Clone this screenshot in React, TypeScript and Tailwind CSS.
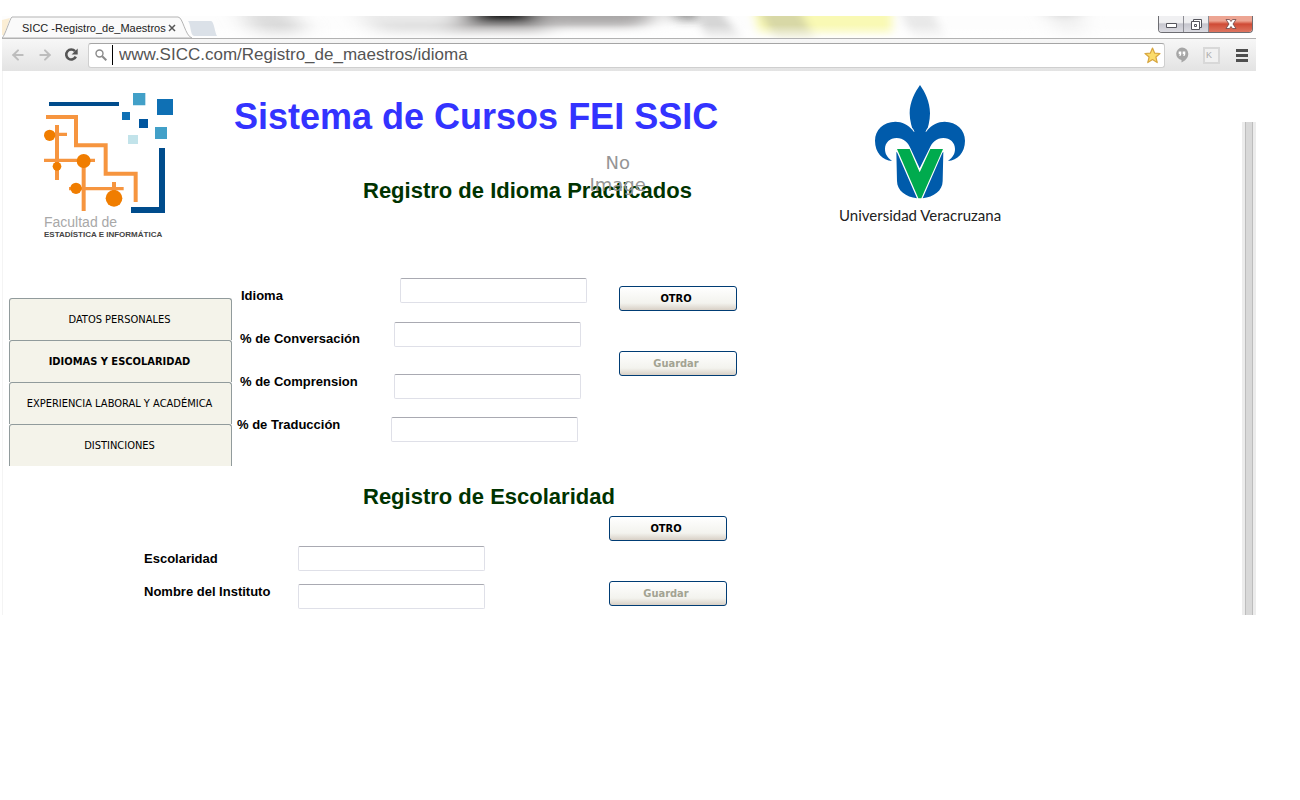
import { ArrowLeft, ArrowRight } from "lucide-react";

const navItems = [
  { text: "DATOS PERSONALES", active: false },
  { text: "IDIOMAS Y ESCOLARIDAD", active: true },
  { text: "EXPERIENCIA LABORAL Y ACADÉMICA", active: false },
  { text: "DISTINCIONES", active: false },
];

const fieldClass =
  "block h-[25px] w-[187px] rounded-[2px] border border-[#dfe0e8] border-t-[#a9aab2] bg-white px-1 text-[13px]";

function TitleBackdrop() {
  return (
    <svg className="absolute inset-0 h-full w-full" viewBox="0 0 1254 22" preserveAspectRatio="none" aria-hidden="true">
      <defs>
        <filter id="soft" x="-20%" y="-60%" width="140%" height="220%">
          <feGaussianBlur stdDeviation="12 4" />
        </filter>
        <filter id="softer" x="-20%" y="-60%" width="140%" height="220%">
          <feGaussianBlur stdDeviation="5 3" />
        </filter>
        <linearGradient id="fade" x1="0" x2="0" y1="0" y2="1">
          <stop offset="0.4" stopColor="#fff" stopOpacity="0" />
          <stop offset="1" stopColor="#fff" stopOpacity="0.8" />
        </linearGradient>
      </defs>
      <rect width="1254" height="22" fill="#fdfdfd" />
      <g filter="url(#soft)">
        <path d="M238 -8H288L304 30H258Z" fill="#dcdcdc" />
        <path d="M275 7H300V18H275Z" fill="#d6d6d6" />
        <path d="M352 -8H462V26H378Z" fill="#e9e9e9" />
        <path d="M380 8H450V18H380Z" fill="#dcdcdc" />
        <path d="M462 -10H640V12H545V20H445Z" fill="#bcbaba" />
        <path d="M466 -12H535V8H470Z" fill="#101010" />
        <path d="M545 -10H650V6H545Z" fill="#a8a6a6" />
        <path d="M674 -12H694V5H680Z" fill="#3a3a3a" />
        <path d="M1046 -10H1074V4H1054Z" fill="#c0c0c0" />
        <path d="M1054 0H1072L1084 28H1062Z" fill="#ececec" />
      </g>
      <g filter="url(#softer)">
        <path d="M694 -6H718L744 30H706Z" fill="#d6d6d6" />
        <path d="M751 -8H890V20H757Z" fill="#f9f9b4" />
        <path d="M756 -6H798L816 30H776Z" fill="#d8d8a6" />
        <path d="M898 -6H930L946 30H914Z" fill="#e9e9e9" />
      </g>
      <rect width="1254" height="22" fill="url(#fade)" />
    </svg>
  );
}

function TitleBar() {
  return (
    <div className="relative flex h-[22px] items-start overflow-hidden">
      <TitleBackdrop />
      <div className="relative h-full w-56">
        <svg className="absolute inset-0 h-full w-full" viewBox="0 0 224 22" aria-hidden="true">
          <path d="M0 4L8 2L2 19H0Z" fill="#fbeed5" />
          <path d="M0 22C3 20 8 2 10 1H176C181 1 183 20 190 22Z" fill="#fafafa" stroke="#b4b4b4" />
          <path d="M186 5H209C212 5 213 17 215 20H192C188 19 189 8 186 5Z" fill="#dbe1e8" />
        </svg>
        <div className="relative flex items-center gap-0.5 pt-1 pl-5 text-[11px] leading-4 text-[#222]">
          <span>SICC -Registro_de_Maestros</span>
          <button type="button" aria-label="Cerrar pestaña" className="h-2 w-2">
            <svg viewBox="0 0 8 8" className="h-2 w-2" stroke="#555" strokeWidth="1.5">
              <path d="M1 1L7 7M7 1L1 7" />
            </svg>
          </button>
        </div>
      </div>
      <div className="relative mr-[3px] ml-auto flex h-[17px] overflow-hidden rounded-b border border-t-0 border-[#6d6d72]">
        <button type="button" aria-label="Minimizar" className="flex w-[25px] items-center justify-center border-r border-[#8d8d94] bg-linear-to-b from-[#f0f0f2] from-40% via-[#c6c6ce] via-50% to-[#dcdce2]">
          <svg viewBox="0 0 11 5" className="mt-0.5 h-[5px] w-[11px]">
            <path d="M.5 .5H10.5V4.5H.5Z" fill="#fff" stroke="#55555c" />
          </svg>
        </button>
        <button type="button" aria-label="Restaurar" className="flex w-[25px] items-center justify-center border-r border-[#8d8d94] bg-linear-to-b from-[#f0f0f2] from-40% via-[#c6c6ce] via-50% to-[#dcdce2]">
          <svg viewBox="0 0 11 11" className="h-[11px] w-[11px]" fill="#fff" stroke="#55555c">
            <path d="M2.5 .5H10.5V8.5H2.5Z" />
            <path d="M.5 2.5H8.5V10.5H.5Z" />
            <path d="M3.5 5.5H5.5V7.5H3.5Z" />
          </svg>
        </button>
        <button type="button" aria-label="Cerrar" className="flex w-[43px] items-center justify-center bg-linear-to-b from-[#eda593] from-30% via-[#cf4a35] via-50% to-[#de7560]">
          <svg viewBox="0 0 12 10" className="h-[10px] w-3">
            <path d="M1 .5H4.5L6 2.5L7.500 .5H11L8 5L11 9.500H7.500L6 7.500L4.500 9.500H1L4 5Z" fill="#fff" stroke="#6b4548" strokeWidth=".8" />
          </svg>
        </button>
      </div>
    </div>
  );
}

function ToolBar() {
  return (
    <div className="flex h-[33px] items-center border-t border-[#b2b2b2] bg-linear-to-b from-[#f7f7f7] to-[#e3e3e3] pr-2 pl-2">
      <div className="flex w-[78px] items-center gap-[11px] text-[#bdbdbd]">
        <button type="button" aria-label="Atrás">
          <ArrowLeft className="h-4 w-4" strokeWidth={3} />
        </button>
        <button type="button" aria-label="Adelante">
          <ArrowRight className="h-4 w-4" strokeWidth={3} />
        </button>
        <button type="button" aria-label="Recargar">
          <svg viewBox="0 0 14 14" className="h-[14px] w-[14px]">
            <path d="M11 3.200A5 5 0 1 0 11.800 8.600" fill="none" stroke="#555" strokeWidth="2.600" />
            <path d="M13.700 .4V6.500H7.600Z" fill="#555" />
          </svg>
        </button>
      </div>
      <div className="flex h-[25px] flex-1 items-center rounded-[3px] border border-[#cfcfcf] border-t-[#a5a5a5] bg-white pr-[3px] pl-1.5">
        <svg viewBox="0 0 12 12" className="h-3 w-3" fill="none" stroke="#8a8a8a">
          <circle cx="4.500" cy="4.500" r="3.500" strokeWidth="1.400" />
          <path d="M7.200 7.200L11.300 11.300" strokeWidth="2" />
        </svg>
        <span className="ml-[5px] h-5 w-px bg-black" />
        <input
          aria-label="Dirección"
          defaultValue="www.SICC.com/Registro_de_maestros/idioma"
          className="ml-1.5 min-w-0 flex-1 bg-transparent text-[17px] leading-5 text-[#555] outline-none"
        />
        <button type="button" aria-label="Marcador">
          <svg viewBox="0 0 17 17" className="h-[17px] w-[17px]">
            <path d="M8.500 1L10.600 6.100L16 6.500L11.900 10L13.200 15.600L8.500 12.600L3.800 15.600L5.100 10L1 6.500L6.400 6.100Z" fill="#fbdc6a" stroke="#d7a640" strokeWidth="1.200" strokeLinejoin="round" />
          </svg>
        </button>
      </div>
      <div className="ml-[10px] flex items-center gap-[14px]">
        <button type="button" aria-label="Hangouts">
          <svg viewBox="0 0 14 16" className="h-4 w-[14px]">
            <path d="M7 .5A6.300 6.300 0 0 1 13.300 6.800C13.300 11 10 14 6.500 15.500V13A6.300 6.300 0 0 1 7 .5Z" fill="#a6a6a6" />
            <path d="M3.700 4.500H6.300V7.200L5.400 9H4.200L5 7.200H3.700ZM7.700 4.500H10.300V7.200L9.400 9H8.200L9 7.200H7.700Z" fill="#fff" />
          </svg>
        </button>
        <button type="button" aria-label="Extensión K" className="flex h-[17px] w-[17px] items-start border-2 border-[#d8d8d8] bg-[#f1f1f1] pl-px text-[9px] leading-[12px] text-[#aaa]">
          K
        </button>
        <button type="button" aria-label="Menú" className="ml-0.5 flex w-3 flex-col gap-0.5">
          <span className="h-[3px] bg-[#4f4f4f]" />
          <span className="h-[3px] bg-[#4f4f4f]" />
          <span className="h-[3px] bg-[#4f4f4f]" />
        </button>
      </div>
    </div>
  );
}

function FacultyLogo() {
  return (
    <div className="w-[135px]">
      <svg viewBox="60 36 405 366" className="h-[122px] w-[135px]" role="img" aria-label="Facultad de Estadística e Informática">
        <path d="M87 66H297V78H87Z M417 204H435V399H333V381H417Z" fill="#004c8c" />
        <path d="M339 39H376V76H339Z M405 141H441V177H405Z" fill="#42a0c8" />
        <path d="M411 57H459V105H411Z M306 96H330V120H306Z" fill="#0f70b4" />
        <path d="M357 117H384V144H357Z" fill="#00569f" />
        <path d="M324 165H354V192H324Z" fill="#c2e3ea" />
        <g fill="none" stroke="#f6953f">
          <path d="M78 111H168V196H257V281H347V366 M111 135V300 M191 241V393 M282 306V345" strokeWidth="12" />
          <path d="M90 163H141 M72 241H225 M147 326H311" strokeWidth="10" />
        </g>
        <g fill="#f07d00">
          <circle cx="89" cy="166" r="17" />
          <circle cx="111" cy="259" r="13" />
          <circle cx="191" cy="243" r="21" />
          <circle cx="168" cy="325" r="17" />
          <circle cx="282" cy="355" r="25" />
        </g>
      </svg>
      <p className="pl-1 text-[14px] leading-4 text-[#a8a8a8]">Facultad de</p>
      <p className="pl-1 text-[8px] leading-[10px] font-bold whitespace-nowrap text-[#444]">ESTADÍSTICA E INFORMÁTICA</p>
    </div>
  );
}

function UniversityLogo() {
  return (
    <div className="flex flex-col items-center">
      <svg viewBox="150 24 300 351" className="h-[117px] w-[100px]" role="img" aria-label="Universidad Veracruzana">
        <g fill="#005bab">
          <path d="M300 30C286 50 269 80 269 115C269 138 276 158 283 180H317C324 158 330 138 330 115C330 80 314 50 300 30Z" />
          <path d="M280 168C264 148 246 140 226 140C190 140 165 165 165 197C165 233 188 256 216 258C201 247 195 236 195 222C195 203 210 189 230 189C250 189 264 202 272 221L299 280L328 221C336 202 350 189 370 189C390 189 405 203 405 222C405 236 399 247 384 258C412 256 435 233 435 197C435 165 410 140 374 140C354 140 336 148 320 168Z" />
          <path d="M229 230L232 234L291 370C258 366 231 347 231 318Z M370 230L367 234L308 370C341 366 368 347 368 318Z" />
        </g>
        <path d="M282 170L277 160M318 170L323 160" stroke="#fff" strokeWidth="3" />
        <path d="M231 222H269L299 292L331 222H369L304 370H295Z" fill="#00ab4e" />
      </svg>
      <p className="font-[Lato,sans-serif] text-[15px] leading-[30px] text-[#222]">Universidad Veracruzana</p>
    </div>
  );
}

function Actions() {
  const base =
    "h-[25px] w-[118px] rounded-[3px] border border-[#003c74] bg-linear-to-b from-white via-[#f3f3ee] via-70% to-[#d8d0c6] pr-1 font-['DejaVu_Sans_Condensed','DejaVu_Sans',sans-serif] text-[11px] leading-[22px] font-bold";
  return (
    <div className="flex flex-col gap-10">
      <button type="button" className={`${base} text-black`}>OTRO</button>
      <button type="button" className={`${base} text-[#a3a392]`}>Guardar</button>
    </div>
  );
}

export default function App() {
  return (
    <div className="min-h-screen bg-white pt-4 pr-11 pl-0.5 font-['Liberation_Sans',Arial,sans-serif] text-black">
      <TitleBar />
      <ToolBar />
      <div className="flex border-l border-[#f4f4f4]">
        <main className="flex-1 pb-[6px] pl-[6px]">
          <header className="flex items-start pt-3">
            <div className="pt-[9px] pl-[31px]">
              <FacultyLogo />
            </div>
            <div className="ml-[59px] w-[605px] pt-3">
              <h1 className="text-[36px] leading-11 font-bold text-[#3333ff]">Sistema de Cursos FEI SSIC</h1>
              <div className="relative mt-[38px] ml-[129px] w-fit">
                <h2 className="text-[22px] leading-7 font-bold text-[#003300]">Registro de Idioma Practicados</h2>
                <p className="absolute -top-[25px] right-[46px] text-center font-['DejaVu_Sans',sans-serif] text-[18px] leading-[22px] text-[#959595]">
                  No
                  <br />
                  Image
                </p>
              </div>
            </div>
            <UniversityLogo />
          </header>

          <section className="mt-[38px] flex items-start">
            <nav className="mt-5 w-[223px] font-['DejaVu_Sans_Condensed',Tahoma,sans-serif] text-[11px]">
              {navItems.map((item) => (
                <a
                  key={item.text}
                  href="#"
                  className={`flex h-[42px] items-center justify-center rounded-t-[3px] border border-b-0 border-[#919b9c] bg-[#f4f3ea] pt-0.5 pr-0.5 ${item.active ? "font-bold" : ""}`}
                >
                  {item.text}
                </a>
              ))}
            </nav>
            <div className="mt-2 ml-[5px] flex w-[154px] flex-col gap-[23px] text-[13px] leading-5 font-bold">
              <label htmlFor="idioma" className="pl-1">Idioma</label>
              <label htmlFor="conversacion" className="pl-[3px]">% de Conversación</label>
              <label htmlFor="comprension" className="pl-[3px]">% de Comprension</label>
              <label htmlFor="traduccion">% de Traducción</label>
            </div>
            <div className="flex w-[228px] flex-col gap-[27px]">
              <div className="flex flex-col gap-[19px]">
                <div className="pl-[9px]"><input id="idioma" className={fieldClass} /></div>
                <div className="pl-[3px]"><input id="conversacion" className={fieldClass} /></div>
              </div>
              <div className="flex flex-col gap-[18px]">
                <div className="pl-[3px]"><input id="comprension" className={fieldClass} /></div>
                <input id="traduccion" className={fieldClass} />
              </div>
            </div>
            <div className="pt-2">
              <Actions />
            </div>
          </section>

          <section className="mt-[17px]">
            <h2 className="ml-[354px] text-[22px] leading-7 font-bold text-[#003300]">Registro de Escolaridad</h2>
            <div className="mt-[5px] ml-[135px] flex items-start">
              <div className="mt-[33px] flex w-[154px] flex-col gap-[13px] text-[13px] leading-5 font-bold">
                <label htmlFor="escolaridad">Escolaridad</label>
                <label htmlFor="instituto">Nombre del Instituto</label>
              </div>
              <div className="mt-[30px] flex w-[311px] flex-col gap-[13px]">
                <input id="escolaridad" className={fieldClass} />
                <input id="instituto" className={fieldClass} />
              </div>
              <Actions />
            </div>
          </section>
        </main>
        <div className="mt-[51px] w-[14px] border-x-[3px] border-[#ececec] bg-[#ececec]">
          <div className="h-full border-x border-[#bdbdbd] bg-[#d8d8d8]" />
        </div>
      </div>
    </div>
  );
}
